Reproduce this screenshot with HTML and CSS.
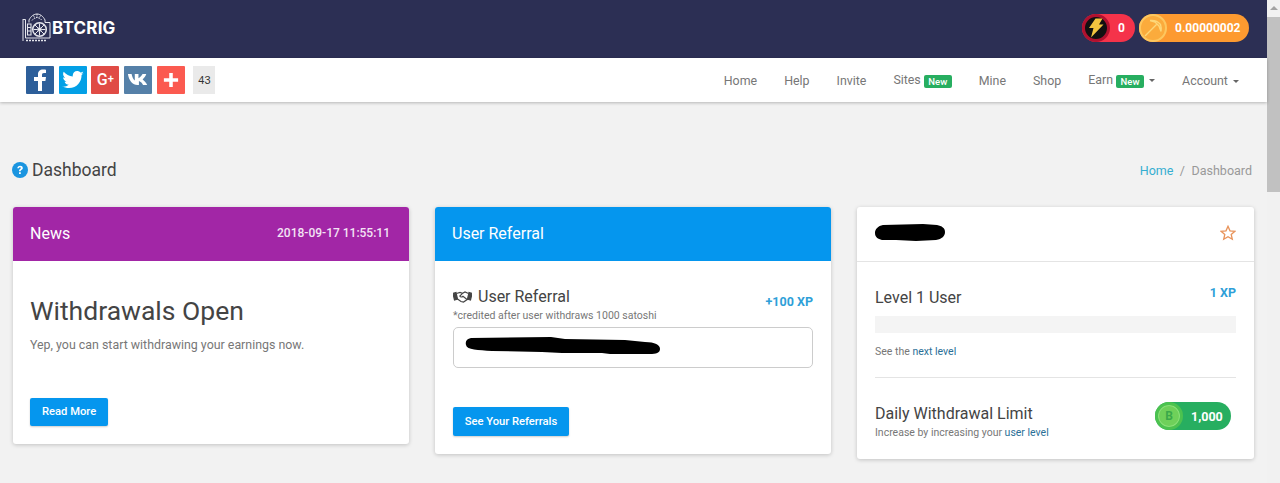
FILE: index.html
```html
<!DOCTYPE html>
<html>
    <head>
        <title>BTCRIG - Dashboard</title>
        <link rel="stylesheet" href="styles.css">
    </head>
    <body>
        <div class="page">
            <header class="topbar">
                <a class="logo">
                    <svg class="logo-icon" width="30" height="30" viewBox="0 0 30 30" fill="none" stroke="#e4e5ec" stroke-width="1">
                        <path d="M1 6.500h2.500V25h24.500V9.500H23M1 6v22M7 9.500V7c2-4 5-6 8-6s6 2 8 6v2.500"/>
                        <path d="M10 7.500c1.500-2 3-3 5-3s3.500 1 5 3M15 1v3.500M11.500 2.500l1.500 3M18.500 2.500l-1.500 3" stroke-dasharray="1.500 1"/>
                        <circle cx="17.500" cy="16.500" r="6.800" stroke-width="1.500"/>
                        <circle cx="17.500" cy="16.500" r="1.800" fill="#e4e5ec"/>
                        <path d="M17.500 10.500v4M17.500 18.500v4M11.500 16.500h4M19.500 16.500h4M13 12l3 3M19 18l3 3M22 12l-3 3M16 18l-3 3"/>
                        <path d="M5.500 11h3.500v11H5.500zM5.500 14.500H9M5.500 18H9" stroke-width="1.100"/>
                        <path d="M4 27.500h20" stroke-width="1.500" stroke-dasharray="2 1"/>
                    </svg>
                    <span>BTCRIG</span>
                </a>
                <div class="balances">
                    <div class="pill pill-red">
                        <span class="coin coin-bolt">
                            <svg width="16" height="20" viewBox="0 0 16 20"><path d="M7.500 0.500h7l-3.500 6h4.500L3 19.500l2.500-9.500H1z" fill="#f3c53f"/></svg>
                        </span>
                        <b>0</b>
                    </div>
                    <div class="pill pill-orange">
                        <span class="coin coin-pick">
                            <svg width="20" height="20" viewBox="0 0 20 20" fill="none" stroke="#fdd779" stroke-width="1.400"><path d="M2 18L13.500 6.500M7 2.500c4-.5 8 1 10.500 4 .8 2.500.8 5 .5 7M7 2.500l5 1.500 4 4 2 5.500"/></svg>
                        </span>
                        <b>0.00000002</b>
                    </div>
                </div>
            </header>
            <nav class="navbar">
                <div class="share">
                    <a class="share-btn fb">
                        <svg width="18" height="22" viewBox="0 0 18 22"><path d="M7 22V12H3V8h4V5.500C7 2 9 .5 12 .5c1.400 0 2.500.1 3 .2V4h-2c-1.600 0-2 .8-2 2v2h4l-.6 4H11v10z" fill="#fff"/></svg>
                    </a>
                    <a class="share-btn tw">
                        <svg width="22" height="18" viewBox="0 0 24 20"><path d="M24 2.400c-.9.400-1.800.7-2.800.8 1-.6 1.800-1.600 2.200-2.700-1 .6-2 1-3.100 1.200C19.300.6 18 0 16.600 0c-2.700 0-4.900 2.200-4.900 4.900 0 .4 0 .8.100 1.100C7.700 5.800 4.100 3.900 1.700.9c-.4.700-.7 1.600-.7 2.500 0 1.700.9 3.200 2.200 4.100-.8 0-1.600-.2-2.200-.6v.1c0 2.400 1.700 4.400 3.900 4.800-.7.200-1.500.2-2.200.1.600 2 2.400 3.400 4.600 3.400-1.700 1.300-3.800 2.100-6.100 2.100-.4 0-.8 0-1.200-.1C2.200 18.200 4.800 19 7.500 19c9.100 0 14-7.500 14-14v-.6c1-.7 1.800-1.600 2.500-2z" fill="#fff"/></svg>
                    </a>
                    <a class="share-btn gp">G<span>+</span></a>
                    <a class="share-btn vk">
                        <svg width="22" height="13" viewBox="0 0 24 14"><path d="M1 1h4c.5 3 2 6 3.500 7V1h4v4.500C14 5 16 3 17 1h4c-.5 2-2.500 4.500-4 6 1.500 1 4 3.500 5 6h-4.500c-.8-2-2.500-3.800-4.500-4.500V13h-1.500C6 13 2 8 1 1z" fill="#fff"/></svg>
                    </a>
                    <a class="share-btn plus">
                        <svg width="16" height="16" viewBox="0 0 18 18"><path d="M7 1h4v6h6v4h-6v6H7v-6H1V7h6z" fill="#fff"/></svg>
                    </a>
                    <span class="share-count">43</span>
                </div>
                <ul class="menu">
                    <li>Home</li>
                    <li>Help</li>
                    <li>Invite</li>
                    <li>Sites <span class="tag">New</span></li>
                    <li>Mine</li>
                    <li>Shop</li>
                    <li>Earn <span class="tag">New</span> <i class="caret"></i></li>
                    <li>Account <i class="caret"></i></li>
                </ul>
            </nav>
            <main class="content">
                <div class="titlebar">
                    <h1>
                        <svg width="16" height="16" viewBox="0 0 16 16"><circle cx="8" cy="8" r="8" fill="#1b95e0"/><path d="M5.300 6.200C5.400 4.600 6.500 3.700 8.100 3.700c1.600 0 2.700.9 2.700 2.200 0 1-.6 1.500-1.300 2-.6.400-.8.600-.8 1.300H7c0-1.200.3-1.700 1.100-2.200.5-.4.800-.6.800-1 0-.5-.4-.8-.9-.8-.6 0-1 .4-1 1zM7 10.200h1.800V12H7z" fill="#fff"/></svg>
                        Dashboard
                    </h1>
                    <div class="crumbs"><a>Home</a><span class="sep">/</span>Dashboard</div>
                </div>
                <div class="cards">
                    <section class="card card-news">
                        <div class="card-head head-purple">
                            <span>News</span>
                            <span class="stamp">2018-09-17 11:55:11</span>
                        </div>
                        <div class="news-body">
                            <h2>Withdrawals Open</h2>
                            <p>Yep, you can start withdrawing your earnings now.</p>
                            <a class="btn">Read More</a>
                        </div>
                    </section>
                    <section class="card card-ref">
                        <div class="card-head head-blue"><span>User Referral</span></div>
                        <div class="ref-body">
                            <div class="ref-top">
                                <div>
                                    <h3>
                                        <svg width="19" height="12" viewBox="0 0 19 12" fill="none" stroke="#444" stroke-width="1.200">
                                            <path d="M0 2.500l3-1 1.500 6.500-3 1z" fill="#444"/>
                                            <path d="M19 2.500l-3-1-1.500 6.500 3 1z" fill="#444"/>
                                            <path d="M3.500 2.500L7 1.500l2.500.8L12 1l3.500 1.500M15 8l-4.500 3-2.500-.5L4.500 8"/>
                                            <path d="M9.500 2.300L6.800 5c.8 1.300 2 1.300 3.200.3L14 8.500"/>
                                        </svg>
                                        User Referral
                                    </h3>
                                    <small>*credited after user withdraws 1000 satoshi</small>
                                </div>
                                <b class="xp">+100 XP</b>
                            </div>
                            <div class="ref-field">
                                <svg width="196" height="18" viewBox="0 0 196 18"><path d="M6 1l80-1 14 2 60 1 20 2c10 0 15 3 15 7 0 4-4 5-10 5l-40 0-8-1-40 0-20-1-50-1c-14-1-25-1-26-6C0 4 2 2 6 1z" fill="#000"/></svg>
                            </div>
                            <a class="btn">See Your Referrals</a>
                        </div>
                    </section>
                    <section class="card card-user">
                        <div class="user-head">
                            <svg width="70" height="17" viewBox="0 0 70 17"><path d="M8 1l40-1 14 1c5 1 8 3 8 7s-3 7-9 8l-20 1-20-1-14 0C3 15 0 13 0 9c0-4 3-7 8-8z" fill="#000"/></svg>
                            <svg class="star" width="16" height="16" viewBox="0 0 16 16" fill="none" stroke="#e8935a" stroke-width="1.300"><path d="M8 1.300l2 4.500 4.900.5-3.700 3.200 1.100 4.800L8 11.800l-4.300 2.500 1.100-4.800L1.100 6.300 6 5.800z"/></svg>
                        </div>
                        <div class="user-body">
                            <div class="level-row">
                                <h3>Level 1 User</h3>
                                <b class="xp">1 XP</b>
                            </div>
                            <div class="progress"></div>
                            <small>See the <a>next level</a></small>
                            <hr>
                            <div class="limit-row">
                                <div>
                                    <h3>Daily Withdrawal Limit</h3>
                                    <small>Increase by increasing your <a>user level</a></small>
                                </div>
                                <div class="pill pill-green">
                                    <span class="coin coin-btc">B</span>
                                    <b>1,000</b>
                                </div>
                            </div>
                        </div>
                    </section>
                </div>
            </main>
        </div>
        <div class="scrollbar">
            <div class="scroll-arrow"></div>
            <div class="scroll-thumb"></div>
        </div>
    </body>
</html>
```

FILE: styles.css
```css
body {
    margin: 0;
    height: 483px;
    overflow: hidden;
    display: flex;
    background: #f2f2f2;
    font-family: "Roboto", sans-serif;
    color: #444;
}
a {
    text-decoration: none;
}
.page {
    width: 1267px;
}
.topbar {
    height: 58px;
    background: #2c2f54;
    display: flex;
    justify-content: space-between;
    align-items: center;
    padding: 0 18px 0 22px;
    box-sizing: border-box;
}
.logo {
    display: flex;
    align-items: center;
    color: #fff;
    font-family: "Inter", sans-serif;
    font-weight: 700;
    font-size: 17px;
    letter-spacing: 0.2px;
    margin-bottom: 2px;
}
.balances {
    display: flex;
    gap: 4px;
    margin-bottom: 3px;
}
.pill {
    height: 28px;
    border-radius: 14px;
    display: flex;
    align-items: center;
    color: #fff;
    font-size: 12px;
}
.pill-red {
    width: 53px;
    background: #f5334a;
}
.pill-red b {
    margin-left: 8px;
}
.pill-orange {
    width: 110px;
    background: #fd9a30;
}
.pill-orange b {
    margin-left: 8px;
}
.pill-green {
    width: 76px;
    background: #27ae60;
    margin-right: 5px;
    font-size: 12.5px;
}
.pill-green b {
    margin-left: 8px;
}
.coin {
    width: 28px;
    height: 28px;
    border-radius: 50%;
    display: flex;
    justify-content: center;
    align-items: center;
    box-sizing: border-box;
    flex: none;
}
.coin-bolt {
    background: #111;
    border: 3px solid #b0112f;
}
.coin-pick {
    background: #fbab3c;
    border: 2px solid #fdc75f;
}
.coin-btc {
    background: #6fd05a;
    border: 3px solid #4cc24f;
    box-shadow: inset 0 0 0 1px #8be07a;
    color: #3aa84a;
    font-weight: 700;
    font-size: 12px;
}
.navbar {
    height: 44px;
    background: #fff;
    display: flex;
    justify-content: space-between;
    align-items: center;
    padding: 0 27px 0 26px;
    box-shadow: 0 1px 3px rgba(0, 0, 0, 0.25);
    position: relative;
}
.share {
    display: flex;
    align-items: center;
    gap: 4.7px;
    margin-top: -1px;
}
.share-btn {
    width: 28px;
    height: 28px;
    border-radius: 1px;
    display: flex;
    justify-content: center;
    align-items: center;
    color: #fff;
    font-weight: 500;
    font-size: 16px;
}
.share-btn span {
    font-size: 11px;
    margin-top: -2px;
}
.fb { background: #2d5f9a; }
.tw { background: #03a0e6; }
.gp { background: #e04b45; }
.vk { background: #5580a8; }
.plus { background: #fb5a50; }
.share-count {
    width: 22px;
    height: 28px;
    margin-left: 4px;
    background: #eaeaea;
    color: #333;
    font-family: "Liberation Sans", sans-serif;
    font-size: 11px;
    display: flex;
    justify-content: center;
    align-items: center;
}
.menu {
    list-style: none;
    margin: 0;
    padding: 0;
    display: flex;
    align-items: center;
    gap: 27px;
    font-size: 12.4px;
    color: #777;
}
.menu li:last-child {
    margin-right: 1px;
}
.tag {
    display: inline-block;
    background: #27ae60;
    color: #fff;
    font-size: 9.5px;
    font-weight: 500;
    line-height: 13px;
    padding: 0 4.5px;
    border-radius: 2px;
    vertical-align: -1px;
}
.caret {
    display: inline-block;
    border: 3.500px solid transparent;
    border-top-color: #666;
    border-bottom: 0;
    margin-left: 2px;
    vertical-align: 2px;
}
.content {
    padding: 57px 13px 0 13px;
}
.titlebar {
    display: flex;
    justify-content: space-between;
    align-items: center;
    height: 22px;
    margin-bottom: 26px;
}
h1 {
    margin: 0 0 0 -1px;
    font-size: 17.500px;
    font-weight: 400;
    color: #444;
    display: flex;
    align-items: center;
    gap: 4px;
}
.crumbs {
    font-size: 12.500px;
    color: #999;
    padding-right: 2px;
}
.crumbs a {
    color: #35aed1;
}
.sep {
    margin: 0 6.500px;
}
.cards {
    display: flex;
    align-items: flex-start;
    gap: 26px;
}
.card {
    width: 396px;
    background: #fff;
    border-radius: 3px;
    box-shadow: 0 1px 4px rgba(0, 0, 0, 0.2);
}
.card-head {
    height: 54px;
    padding: 0 19px 2px 17px;
    border-radius: 3px 3px 0 0;
    display: flex;
    justify-content: space-between;
    align-items: center;
    color: #fff;
    font-size: 16px;
    box-sizing: border-box;
}
.head-purple {
    background: #a226a6;
}
.head-blue {
    background: #0596ee;
}
.stamp {
    font-size: 12px;
    font-weight: 500;
    color: #f3e3f4;
}
.news-body {
    height: 183px;
    padding: 0 17px;
    box-sizing: border-box;
}
h2 {
    margin: 0;
    padding-top: 33px;
    font-size: 26.500px;
    line-height: 34px;
    font-weight: 400;
    color: #444;
}
.news-body p {
    margin: 9px 0 0;
    font-size: 12.400px;
    line-height: 16px;
    color: #777;
}
.btn {
    display: inline-block;
    background: #0596ee;
    color: #fff;
    font-size: 11.200px;
    font-weight: 500;
    line-height: 29px;
    padding: 0 11.700px;
    border-radius: 2px;
    box-shadow: 0 1px 2px rgba(0, 0, 0, 0.2);
}
.news-body .btn {
    margin-top: 45px;
    line-height: 28px;
    padding: 0 12px;
}
.ref-body {
    height: 193px;
    padding: 27px 18px 0 18px;
    box-sizing: border-box;
}
.ref-top {
    display: flex;
    justify-content: space-between;
    align-items: flex-start;
}
h3 {
    margin: 0;
    font-size: 16px;
    line-height: 18px;
    font-weight: 400;
    color: #444;
}
.ref-top h3 {
    display: flex;
    align-items: center;
    gap: 6px;
    margin-bottom: 3px;
}
.ref-top .xp {
    margin-top: 6px;
}
small {
    display: block;
    font-size: 10.500px;
    line-height: 14px;
    color: #777;
}
small a {
    color: #2a6f97;
}
.xp {
    font-size: 12.500px;
    font-weight: 700;
    color: #2f9fd8;
}
.ref-field {
    height: 41px;
    margin-top: 4px;
    border: 1px solid #ccc;
    border-radius: 5px;
    display: flex;
    align-items: center;
    padding-left: 11px;
    box-sizing: border-box;
}
.ref-field svg {
    margin-top: -4px;
}
.ref-body .btn {
    margin-top: 39px;
}
.card-user {
    width: 397px;
}
.user-head {
    height: 55px;
    border-bottom: 1px solid #e4e4e4;
    display: flex;
    justify-content: space-between;
    align-items: center;
    padding: 0 18px 3px;
    box-sizing: border-box;
}
.user-body {
    height: 197px;
    padding: 27px 18px 0;
    box-sizing: border-box;
}
.level-row {
    display: flex;
    justify-content: space-between;
}
.level-row .xp {
    margin-top: -4px;
}
.progress {
    height: 17px;
    margin: 9px 0 12px;
    background: #f4f4f4;
}
hr {
    border: 0;
    border-top: 1px solid #e4e4e4;
    margin: 18px 0 0;
}
.limit-row {
    display: flex;
    justify-content: space-between;
    align-items: flex-start;
    margin-top: 24px;
}
.limit-row h3 {
    margin: 3px 0 3px;
}
.scrollbar {
    width: 13px;
    margin-left: auto;
    background: #f1f1f1;
}
.scroll-arrow {
    height: 17px;
    background: #f1f1f1;
    position: relative;
}
.scroll-arrow::after {
    content: "";
    position: absolute;
    left: 3px;
    top: 6px;
    border: 4px solid transparent;
    border-top: 0;
    border-bottom-color: #a3a3a3;
}
.scroll-thumb {
    height: 175px;
    background: #c1c1c1;
}
```
